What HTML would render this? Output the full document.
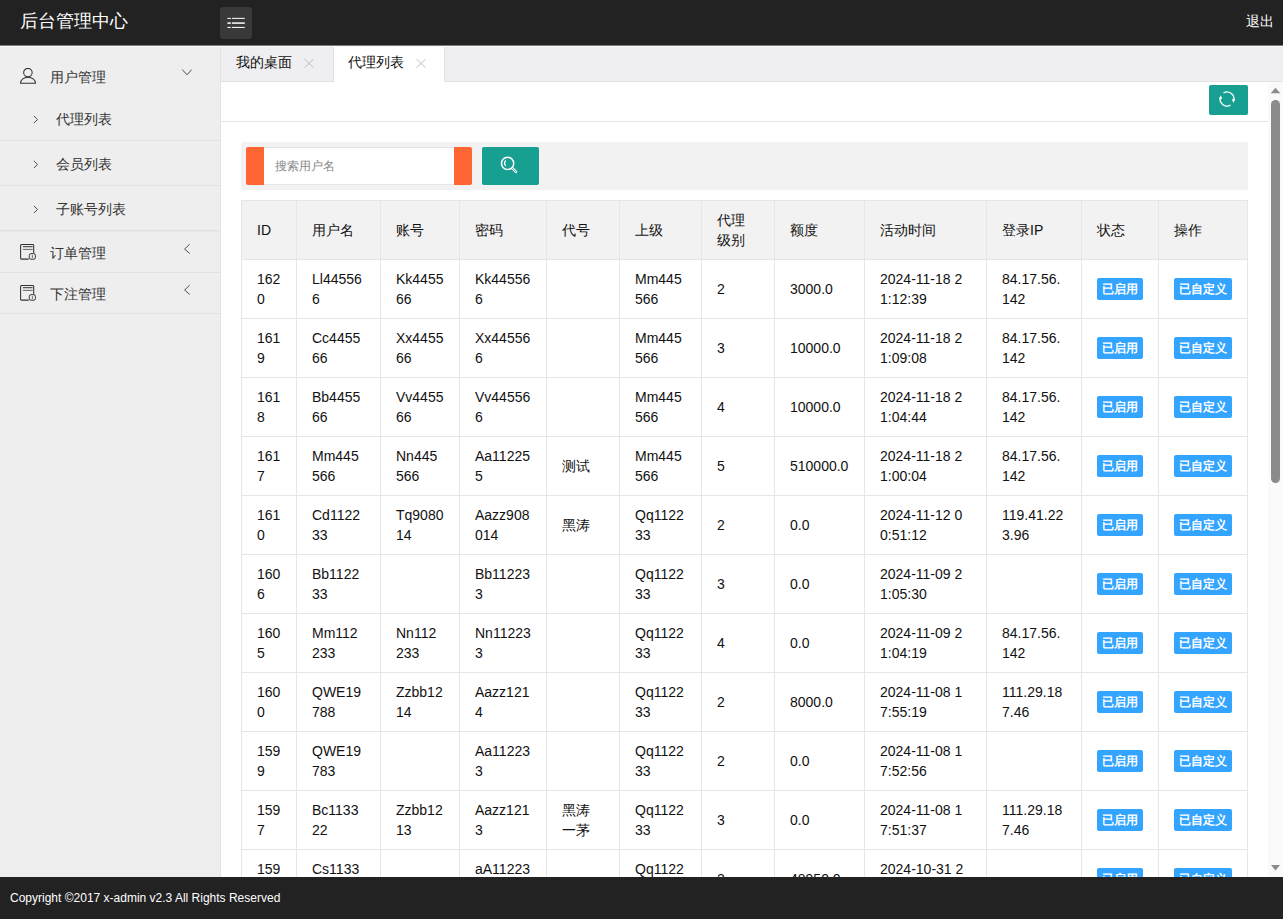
<!DOCTYPE html>
<html><head><meta charset="utf-8">
<style>
*{margin:0;padding:0;box-sizing:border-box;}
html,body{width:1283px;height:919px;overflow:hidden;background:#fff;font-family:"Liberation Sans",sans-serif;color:#333;font-size:14px;}
.abs{position:absolute;}
.hdr{position:absolute;left:0;top:0;width:1283px;height:45px;background:#222;}
.hline1{position:absolute;left:0;top:45px;width:1283px;height:1px;background:#7a7a7a;}
.hline2{position:absolute;left:0;top:46px;width:1283px;height:1px;background:#fafafa;}
.logo{position:absolute;left:20px;top:9px;color:#fff;font-size:18px;line-height:24px;white-space:nowrap;}
.menubtn{position:absolute;left:220px;top:7px;width:32px;height:32px;background:#393939;border-radius:3px;}
.logout{position:absolute;left:1245.6px;top:11px;color:#fff;font-size:14px;line-height:20px;}
.side{position:absolute;left:0;top:47px;width:221px;height:830px;background:#eee;border-right:1px solid #e2e2e2;}
.side .t{position:absolute;font-size:14px;line-height:20px;color:#333;white-space:nowrap;}
.side .sep{position:absolute;left:0;width:220px;height:1px;background:#e2e2e2;}
.tabs{position:absolute;left:221px;top:47px;width:1062px;height:35px;background:#efeef0;border-bottom:1px solid #e2e2e2;}
.tab{position:absolute;top:0;height:35px;}
.tab .t{position:absolute;top:5px;font-size:14px;line-height:20px;color:#111;white-space:nowrap;}
.tab2{left:112px;width:112px;background:#fff;border-left:1px solid #e2e2e2;border-right:1px solid #e2e2e2;height:35px;}
.frame{position:absolute;left:221px;top:82px;width:1062px;height:795px;background:#fff;overflow:hidden;}
.ftr{position:absolute;left:0;top:877px;width:1283px;height:42px;background:#222;color:#fff;font-size:12px;line-height:20px;padding:11px 0 0 10px;white-space:nowrap;}
.xnav{position:absolute;left:0;top:39px;width:1047px;height:1px;background:#e5e5e5;}
.refresh{position:absolute;left:988px;top:3px;width:39px;height:30px;background:#179f91;border-radius:2px;}
.sb{position:absolute;left:1047px;top:0;width:15px;height:795px;background:#fafafa;}
.thumb{position:absolute;left:3px;top:18px;width:9px;height:383px;background:#8b8b8b;border-radius:5px;}
.sogray{position:absolute;left:20px;top:60px;width:1007px;height:48px;background:#f2f2f2;border-radius:2px;}
.orange{position:absolute;left:5px;top:5px;width:226px;height:38px;background:#ff6633;border-radius:2px;}
.inp{position:absolute;left:18px;top:0;width:190px;height:38px;background:#fff;border-top:1px solid #e6e6e6;border-bottom:1px solid #e6e6e6;}
.inp span{position:absolute;left:11px;top:10px;font-size:12px;line-height:17px;color:#888;white-space:nowrap;}
.sbtn{position:absolute;left:241px;top:5px;width:57px;height:38px;background:#179f91;border-radius:2px;}
.tb{position:absolute;left:20px;top:118px;border-collapse:separate;border-spacing:0;table-layout:fixed;width:1007px;border-right:1px solid #e6e6e6;}
.tb td{border-left:1px solid #e6e6e6;border-bottom:1px solid #e6e6e6;padding:9px 15px 9px 15px;line-height:20px;font-size:14px;color:#111;vertical-align:middle;white-space:nowrap;overflow:hidden;height:59px;}
.tb tr.th td{background:#f2f2f2;border-top:1px solid #e6e6e6;height:60px;padding-top:9px;}
.bx{display:inline-block;height:22px;line-height:22px;padding:0 5px;background:#33a4ff;color:#fff;font-size:12px;font-weight:bold;border-radius:2px;white-space:nowrap;}
</style></head><body>
<div class="hdr">
  <div class="logo">后台管理中心</div>
  <div class="menubtn">
    <svg class="abs" style="left:0;top:0" width="32" height="32" viewBox="0 0 32 32">
      <rect x="7.4" y="10.85" width="3.5" height="1.1" fill="#eee"/><rect x="11.9" y="10.85" width="12.9" height="1.1" fill="#eee"/>
      <rect x="7.4" y="15.3" width="3.5" height="1.6" fill="#eee"/><rect x="11.9" y="15.3" width="12.9" height="1.6" fill="#eee"/>
      <rect x="7.4" y="19.9" width="3.5" height="1.1" fill="#eee"/><rect x="11.9" y="19.9" width="12.9" height="1.1" fill="#eee"/>
    </svg>
  </div>
  <div class="logout">退出</div>
</div>
<div class="hline1"></div><div class="hline2"></div>

<div class="side">
  <svg class="abs" style="left:20px;top:21px" width="17" height="17" viewBox="0 0 17 17">
    <circle cx="7.9" cy="4.6" r="4.25" fill="none" stroke="#333" stroke-width="1.05"/>
    <path d="M0.55 15.3 A7.4 6.1 0 0 1 15.45 15.3 Z" fill="none" stroke="#333" stroke-width="1.05"/>
  </svg>
  <div class="t" style="left:50px;top:20px">用户管理</div>
  <svg class="abs" style="left:181px;top:21px" width="12" height="8" viewBox="0 0 12 8">
    <path d="M1.3 1.6 L6 6.8 L10.7 1.6" fill="none" stroke="#444" stroke-width="0.95"/>
  </svg>

  <svg class="abs" style="left:32px;top:68px" width="8" height="10" viewBox="0 0 8 10"><path d="M1.9 0.9 L5.6 4.5 L1.9 8" fill="none" stroke="#444" stroke-width="0.95"/></svg>
  <div class="t" style="left:56px;top:62px">代理列表</div>
  <div class="sep" style="top:93px"></div>
  <svg class="abs" style="left:32px;top:113px" width="8" height="10" viewBox="0 0 8 10"><path d="M1.9 0.9 L5.6 4.5 L1.9 8" fill="none" stroke="#444" stroke-width="0.95"/></svg>
  <div class="t" style="left:56px;top:107px">会员列表</div>
  <div class="sep" style="top:138px"></div>
  <svg class="abs" style="left:32px;top:158px" width="8" height="10" viewBox="0 0 8 10"><path d="M1.9 0.9 L5.6 4.5 L1.9 8" fill="none" stroke="#444" stroke-width="0.95"/></svg>
  <div class="t" style="left:56px;top:152px">子账号列表</div>
  <div class="sep" style="top:183px"></div>
  <div class="sep" style="top:184px;background:#e8e8e8"></div>

  <svg class="abs" style="left:20px;top:197px" width="17" height="17" viewBox="0 0 17 17">
    <path d="M8.8 15.1 H1.6 Q0.6 15.1 0.6 14.1 V1.5 Q0.6 0.5 1.6 0.5 H12.7 Q13.7 0.5 13.7 1.5 V9.2" fill="none" stroke="#333" stroke-width="1.05"/>
    <rect x="2.9" y="2.2" width="9.7" height="1" fill="#333"/><rect x="2.9" y="4.9" width="9.7" height="1" fill="#666"/>
    <rect x="9.3" y="9.7" width="6.1" height="5.5" rx="1.6" fill="none" stroke="#333" stroke-width="1"/>
    <rect x="11.9" y="11.2" width="0.9" height="2.6" fill="#555"/>
  </svg>
  <div class="t" style="left:50px;top:196px">订单管理</div>
  <svg class="abs" style="left:182px;top:196px" width="10" height="12" viewBox="0 0 10 12"><path d="M7.7 1.2 L2.6 6 L7.7 10.5" fill="none" stroke="#444" stroke-width="0.95"/></svg>
  <div class="sep" style="top:225px"></div>

  <svg class="abs" style="left:20px;top:238px" width="17" height="17" viewBox="0 0 17 17">
    <path d="M8.8 15.1 H1.6 Q0.6 15.1 0.6 14.1 V1.5 Q0.6 0.5 1.6 0.5 H12.7 Q13.7 0.5 13.7 1.5 V9.2" fill="none" stroke="#333" stroke-width="1.05"/>
    <rect x="2.9" y="2.2" width="9.7" height="1" fill="#333"/><rect x="2.9" y="4.9" width="9.7" height="1" fill="#666"/>
    <rect x="9.3" y="9.7" width="6.1" height="5.5" rx="1.6" fill="none" stroke="#333" stroke-width="1"/>
    <rect x="11.9" y="11.2" width="0.9" height="2.6" fill="#555"/>
  </svg>
  <div class="t" style="left:50px;top:237px">下注管理</div>
  <svg class="abs" style="left:182px;top:237px" width="10" height="12" viewBox="0 0 10 12"><path d="M7.7 1.2 L2.6 6 L7.7 10.5" fill="none" stroke="#444" stroke-width="0.95"/></svg>
  <div class="sep" style="top:266px"></div>
</div>

<div class="tabs">
  <div class="tab" style="left:0;width:112px;">
    <div class="t" style="left:15px">我的桌面</div>
    <svg class="abs" style="left:82px;top:11px" width="12" height="12" viewBox="0 0 12 12"><path d="M1.5 1.2 L10.5 9.6 M10.5 1.2 L1.5 9.6" stroke="#bdbdbd" stroke-width="0.95"/></svg>
  </div>
  <div class="tab tab2">
    <div class="t" style="left:14px">代理列表</div>
    <svg class="abs" style="left:81px;top:11px" width="12" height="12" viewBox="0 0 12 12"><path d="M1.5 1.2 L10.5 9.6 M10.5 1.2 L1.5 9.6" stroke="#bdbdbd" stroke-width="0.95"/></svg>
  </div>
</div>

<div class="frame">
  <div class="xnav"></div>
  <div class="refresh">
    <svg class="abs" style="left:0;top:0" width="39" height="30" viewBox="0 0 39 30">
      <path d="M14.5 7.9 A7 7 0 0 1 24.8 15.3" fill="none" stroke="#fff" stroke-width="1.3"/>
      <path d="M21.5 20.1 A7 7 0 0 1 11.2 12.7" fill="none" stroke="#fff" stroke-width="1.3"/>
      <path d="M22.9 14.2 L26.3 14.0 L24.3 17.9 Z" fill="#fff"/>
      <path d="M10.0 13.8 L13.3 14.0 L11.8 10.2 Z" fill="#fff"/>
    </svg>
  </div>
  <div class="sogray">
    <div class="orange"><div class="inp"><span>搜索用户名</span></div></div>
    <div class="sbtn">
      <svg class="abs" style="left:0;top:0" width="57" height="38" viewBox="0 0 57 38">
        <circle cx="25.6" cy="16.4" r="6.1" fill="none" stroke="#fff" stroke-width="1.5"/>
        <path d="M23.8 13.6 A3.4 3.4 0 0 0 23.8 18.8" fill="none" stroke="#fff" stroke-width="1.3"/>
        <path d="M30.2 21 L34 24.8" stroke="#fff" stroke-width="2.6" stroke-linecap="round"/>
        <path d="M30.2 21 L34 24.8" stroke="#179f91" stroke-width="0.9" stroke-linecap="round"/>
      </svg>
    </div>
  </div>
<table class="tb"><colgroup><col style="width:55px"><col style="width:84px"><col style="width:79px"><col style="width:87px"><col style="width:73px"><col style="width:82px"><col style="width:73px"><col style="width:90px"><col style="width:122px"><col style="width:95px"><col style="width:77px"><col style="width:89px"></colgroup>
<tr class="th"><td>ID</td><td>用户名</td><td>账号</td><td>密码</td><td>代号</td><td>上级</td><td>代理<br>级别</td><td>额度</td><td>活动时间</td><td>登录IP</td><td>状态</td><td>操作</td></tr>
<tr><td>162<br>0</td><td>Ll44556<br>6</td><td>Kk4455<br>66</td><td>Kk44556<br>6</td><td></td><td>Mm445<br>566</td><td>2</td><td>3000.0</td><td>2024-11-18 2<br>1:12:39</td><td>84.17.56.<br>142</td><td><span class="bx">已启用</span></td><td><span class="bx">已自定义</span></td></tr>
<tr><td>161<br>9</td><td>Cc4455<br>66</td><td>Xx4455<br>66</td><td>Xx44556<br>6</td><td></td><td>Mm445<br>566</td><td>3</td><td>10000.0</td><td>2024-11-18 2<br>1:09:08</td><td>84.17.56.<br>142</td><td><span class="bx">已启用</span></td><td><span class="bx">已自定义</span></td></tr>
<tr><td>161<br>8</td><td>Bb4455<br>66</td><td>Vv4455<br>66</td><td>Vv44556<br>6</td><td></td><td>Mm445<br>566</td><td>4</td><td>10000.0</td><td>2024-11-18 2<br>1:04:44</td><td>84.17.56.<br>142</td><td><span class="bx">已启用</span></td><td><span class="bx">已自定义</span></td></tr>
<tr><td>161<br>7</td><td>Mm445<br>566</td><td>Nn445<br>566</td><td>Aa11225<br>5</td><td>测试</td><td>Mm445<br>566</td><td>5</td><td>510000.0</td><td>2024-11-18 2<br>1:00:04</td><td>84.17.56.<br>142</td><td><span class="bx">已启用</span></td><td><span class="bx">已自定义</span></td></tr>
<tr><td>161<br>0</td><td>Cd1122<br>33</td><td>Tq9080<br>14</td><td>Aazz908<br>014</td><td>黑涛</td><td>Qq1122<br>33</td><td>2</td><td>0.0</td><td>2024-11-12 0<br>0:51:12</td><td>119.41.22<br>3.96</td><td><span class="bx">已启用</span></td><td><span class="bx">已自定义</span></td></tr>
<tr><td>160<br>6</td><td>Bb1122<br>33</td><td></td><td>Bb11223<br>3</td><td></td><td>Qq1122<br>33</td><td>3</td><td>0.0</td><td>2024-11-09 2<br>1:05:30</td><td></td><td><span class="bx">已启用</span></td><td><span class="bx">已自定义</span></td></tr>
<tr><td>160<br>5</td><td>Mm112<br>233</td><td>Nn112<br>233</td><td>Nn11223<br>3</td><td></td><td>Qq1122<br>33</td><td>4</td><td>0.0</td><td>2024-11-09 2<br>1:04:19</td><td>84.17.56.<br>142</td><td><span class="bx">已启用</span></td><td><span class="bx">已自定义</span></td></tr>
<tr><td>160<br>0</td><td>QWE19<br>788</td><td>Zzbb12<br>14</td><td>Aazz121<br>4</td><td></td><td>Qq1122<br>33</td><td>2</td><td>8000.0</td><td>2024-11-08 1<br>7:55:19</td><td>111.29.18<br>7.46</td><td><span class="bx">已启用</span></td><td><span class="bx">已自定义</span></td></tr>
<tr><td>159<br>9</td><td>QWE19<br>783</td><td></td><td>Aa11223<br>3</td><td></td><td>Qq1122<br>33</td><td>2</td><td>0.0</td><td>2024-11-08 1<br>7:52:56</td><td></td><td><span class="bx">已启用</span></td><td><span class="bx">已自定义</span></td></tr>
<tr><td>159<br>7</td><td>Bc1133<br>22</td><td>Zzbb12<br>13</td><td>Aazz121<br>3</td><td>黑涛<br>一茅</td><td>Qq1122<br>33</td><td>3</td><td>0.0</td><td>2024-11-08 1<br>7:51:37</td><td>111.29.18<br>7.46</td><td><span class="bx">已启用</span></td><td><span class="bx">已自定义</span></td></tr>
<tr><td>159<br>6</td><td>Cs1133<br>22</td><td></td><td>aA11223<br>3</td><td></td><td>Qq1122<br>33</td><td>2</td><td>48950.0</td><td>2024-10-31 2<br>1:05:11</td><td></td><td><span class="bx">已启用</span></td><td><span class="bx">已自定义</span></td></tr>
</table>
  <div class="sb">
    <svg class="abs" style="left:0;top:0" width="15" height="795" viewBox="0 0 15 795">
      <path d="M2.7 11.2 L7.5 5.8 L12.3 11.2 Z" fill="#8b8b8b"/>
      <path d="M3 783 L12 783 L7.5 788.5 Z" fill="#8b8b8b"/>
    </svg>
    <div class="thumb"></div>
  </div>
</div>

<div class="ftr">Copyright ©2017 x-admin v2.3 All Rights Reserved</div>
</body></html>
